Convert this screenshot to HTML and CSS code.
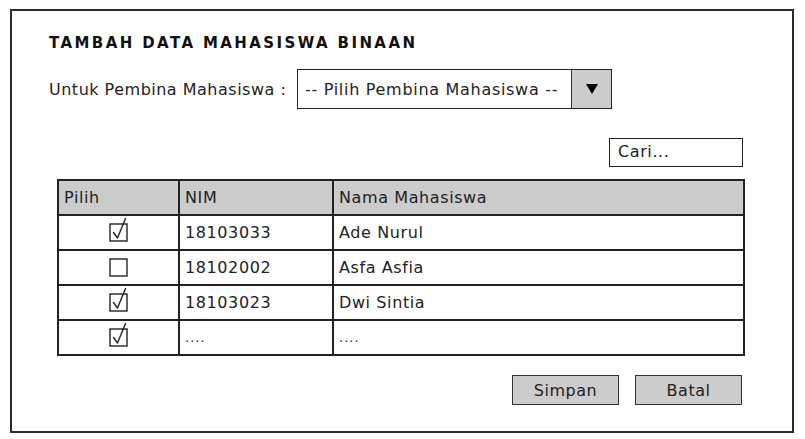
FILE: index.html
```html
<!DOCTYPE html>
<html>
<head>
<meta charset="utf-8">
<link rel="stylesheet" href="styles.css">
</head>
<body>
<div class="frame">
  <h1 class="title">TAMBAH DATA MAHASISWA BINAAN</h1>
  <div class="pick-row">
    <span class="label">Untuk Pembina Mahasiswa :</span>
    <div class="select">
      <span class="select-text">-- Pilih Pembina Mahasiswa --</span>
      <span class="select-btn"><svg width="14" height="12" viewBox="0 0 14 12"><polygon points="1,1 13,1 7,11" fill="#000"/></svg></span>
    </div>
  </div>
  <div class="list-area">
    <div class="search-row"><div class="search">Cari...</div></div>
    <table class="grid">
      <colgroup><col class="c1"><col class="c2"><col class="c3"></colgroup>
      <thead>
        <tr><th>Pilih</th><th>NIM</th><th>Nama Mahasiswa</th></tr>
      </thead>
      <tbody>
        <tr><td class="chk"><svg class="cb" width="22" height="26" viewBox="0 0 22 26"><rect x="2" y="7" width="17" height="17" fill="none" stroke="#222" stroke-width="1.4"/><path d="M5.5 15.5 L9.5 21 L17.5 1.5" fill="none" stroke="#222" stroke-width="1.4" stroke-linecap="round" stroke-linejoin="round"/></svg></td><td>18103033</td><td>Ade Nurul</td></tr>
        <tr><td class="chk"><svg class="cb" width="22" height="26" viewBox="0 0 22 26"><rect x="2" y="7" width="17" height="17" fill="none" stroke="#222" stroke-width="1.4"/></svg></td><td>18102002</td><td>Asfa Asfia</td></tr>
        <tr><td class="chk"><svg class="cb" width="22" height="26" viewBox="0 0 22 26"><rect x="2" y="7" width="17" height="17" fill="none" stroke="#222" stroke-width="1.4"/><path d="M5.5 15.5 L9.5 21 L17.5 1.5" fill="none" stroke="#222" stroke-width="1.4" stroke-linecap="round" stroke-linejoin="round"/></svg></td><td>18103023</td><td>Dwi Sintia</td></tr>
        <tr><td class="chk"><svg class="cb" width="22" height="26" viewBox="0 0 22 26"><rect x="2" y="7" width="17" height="17" fill="none" stroke="#222" stroke-width="1.4"/><path d="M5.5 15.5 L9.5 21 L17.5 1.5" fill="none" stroke="#222" stroke-width="1.4" stroke-linecap="round" stroke-linejoin="round"/></svg></td><td class="dots">....</td><td class="dots">....</td></tr>
      </tbody>
    </table>
    <div class="actions">
      <button class="btn">Simpan</button>
      <button class="btn">Batal</button>
    </div>
  </div>
</div>
</body>
</html>
```

FILE: styles.css
```css
* { box-sizing: border-box; }
html, body { margin: 0; padding: 0; background: #fff; }
body {
  font-family: "DejaVu Sans", "Liberation Sans", sans-serif;
  color: #111;
  width: 805px;
  height: 439px;
  overflow: hidden;
}
.frame {
  margin: 9px 0 0 10px;
  width: 784px;
  height: 424px;
  border: 2px solid #2a2a2a;
  padding: 22px 0 0 37px;
}
.title {
  margin: 0;
  font-size: 15px;
  font-weight: bold;
  line-height: 20px;
  letter-spacing: 2.4px;
  color: #111;
}
.pick-row {
  display: flex;
  align-items: center;
  margin-top: 16px;
  height: 40px;
}
.label {
  font-size: 16px;
  letter-spacing: 0.5px;
  width: 248px;
  color: #222;
}
.select {
  display: flex;
  width: 315px;
  height: 40px;
  border: 1.5px solid #222;
}
.select-text {
  flex: 1;
  display: flex;
  align-items: center;
  padding-left: 7px;
  font-size: 16px;
  letter-spacing: 0.7px;
  color: #222;
}
.select-btn {
  width: 40px;
  background: #cccccc;
  border-left: 1.5px solid #333;
  display: flex;
  align-items: center;
  justify-content: center;
}
.list-area {
  margin-left: 8px;
  width: 686px;
}
.search-row {
  display: flex;
  justify-content: flex-end;
  margin-top: 29px;
}
.search {
  width: 134px;
  height: 29px;
  border: 1.5px solid #222;
  padding-left: 8px;
  font-size: 16px;
  letter-spacing: 0.6px;
  line-height: 26px;
  color: #222;
}
.grid {
  margin-top: 12px;
  width: 686px;
  border-collapse: collapse;
  table-layout: fixed;
  font-size: 16px;
  letter-spacing: 0.6px;
  color: #222;
}
.c1 { width: 121px; }
.c2 { width: 154px; }
.c3 { width: 411px; }
.grid th, .grid td {
  border: 2px solid #222;
  text-align: left;
  font-weight: normal;
  padding: 0 0 0 5px;
  height: 35px;
}
.grid th { background: #cccccc; }
.grid td.chk { padding: 0; text-align: center; }
.cb { display: block; margin: -6px auto 0; }
.dots { letter-spacing: 1px; font-size: 13px; }
.actions {
  display: flex;
  justify-content: flex-end;
  gap: 16px;
  margin-top: 19px;
  padding-right: 1px;
}
.btn {
  width: 107px;
  height: 30px;
  background: #cccccc;
  border: 1.5px solid #333;
  font-family: inherit;
  font-size: 16px;
  letter-spacing: 0.5px;
  color: #222;
  padding: 0;
}
```
